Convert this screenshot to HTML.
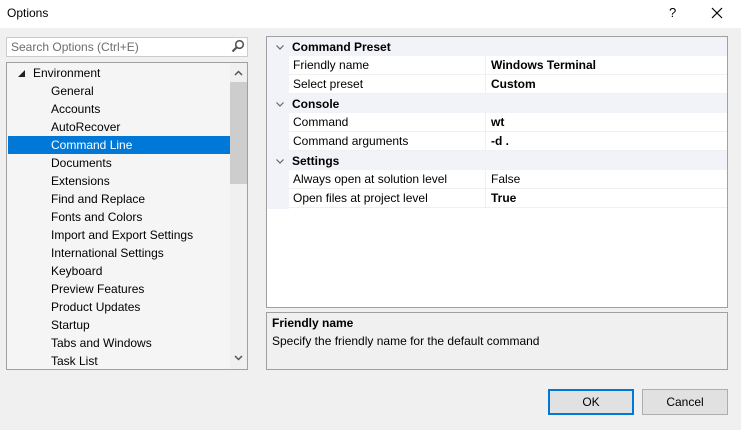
<!DOCTYPE html><html><head><style>
body{margin:0;width:741px;height:430px;background:#f0f0f0;font-family:"Liberation Sans",sans-serif;font-size:12px;color:#000;position:relative;overflow:hidden}
.a{position:absolute}
.tree div{height:18px;line-height:18px;padding-left:43px;white-space:nowrap}
.g .r{position:absolute;left:22px;right:0;height:18px;line-height:19px;border-bottom:1px solid #f0f0f0;background:#fff}
.g .h{position:absolute;left:0;right:0;height:19px;line-height:20px;background:#f1f3f8;font-weight:bold;padding-left:25px}
.g .r span{position:absolute;left:4px}.g .r b{position:absolute;left:202px}
.sep{position:absolute;left:196px;top:0;width:1px;height:18px;background:#f0f0f0}
</style></head><body>
<div class="a" style="left:0;top:0;width:741px;height:28px;background:#fff"></div>
<div class="a" style="left:7px;top:6px;font-size:12px">Options</div>
<div class="a" style="left:669px;top:5px;font-size:13px">?</div>
<svg class="a" style="left:711px;top:7px" width="12" height="12"><path d="M1 1L11 11M11 1L1 11" stroke="#000" stroke-width="1.2"/></svg>
<div class="a" style="left:6px;top:37px;width:240px;height:18px;border:1px solid #ccc;background:#fff;color:#6d6d6d;line-height:18px;text-indent:4px">Search Options (Ctrl+E)</div>
<svg class="a" style="left:231px;top:39px" width="14" height="14"><circle cx="8.5" cy="5.5" r="3.8" fill="none" stroke="#555" stroke-width="1.6"/><path d="M6 8L1.5 12.5" stroke="#555" stroke-width="2.2"/></svg>
<div class="a" style="left:6px;top:62px;width:240px;height:306px;border:1px solid #a0a0a0;background:#f5f5f5;overflow:hidden">
<div class="a tree" style="left:1px;top:1px;width:222px">
<div style="padding-left:25px"><svg style="position:absolute;left:10px;top:6px" width="7" height="7"><path d="M7 0L7 7L0 7Z" fill="#222"/></svg>Environment</div>
<div>General</div><div>Accounts</div><div>AutoRecover</div>
<div style="background:#0078d7;color:#fff">Command Line</div>
<div>Documents</div><div>Extensions</div><div>Find and Replace</div><div>Fonts and Colors</div><div>Import and Export Settings</div><div>International Settings</div><div>Keyboard</div><div>Preview Features</div><div>Product Updates</div><div>Startup</div><div>Tabs and Windows</div><div>Task List</div></div>
<div class="a" style="left:223px;top:0;width:17px;height:306px;background:#f0f0f0"></div>
<div class="a" style="left:223px;top:19px;width:17px;height:102px;background:#cdcdcd"></div>
<svg class="a" style="left:227px;top:7px" width="9" height="6"><path d="M1 5L4.5 1.5L8 5" fill="none" stroke="#555" stroke-width="1.5"/></svg>
<svg class="a" style="left:227px;top:292px" width="9" height="6"><path d="M1 1L4.5 4.5L8 1" fill="none" stroke="#555" stroke-width="1.5"/></svg>
</div>
<div class="a g" style="left:266px;top:36px;width:460px;height:270px;border:1px solid #a0a0a0;background:#fff">
<div class="a" style="left:0;top:0;width:22px;height:172px;background:#f1f3f8"></div>
<div class="h" style="top:0">Command Preset</div>
<div class="r" style="top:19px"><span>Friendly name</span><i class="sep"></i><b>Windows Terminal</b></div>
<div class="r" style="top:38px"><span>Select preset</span><i class="sep"></i><b>Custom</b></div>
<div class="h" style="top:57px">Console</div>
<div class="r" style="top:76px"><span>Command</span><i class="sep"></i><b>wt</b></div>
<div class="r" style="top:95px"><span>Command arguments</span><i class="sep"></i><b>-d .</b></div>
<div class="h" style="top:114px">Settings</div>
<div class="r" style="top:133px"><span>Always open at solution level</span><i class="sep"></i><b style="font-weight:normal">False</b></div>
<div class="r" style="top:152px"><span>Open files at project level</span><i class="sep"></i><b>True</b></div>
<svg class="a" style="left:9px;top:8px" width="8" height="5"><path d="M0.5 0.5L4 4L7.5 0.5" fill="none" stroke="#666" stroke-width="1.2"/></svg>
<svg class="a" style="left:9px;top:65px" width="8" height="5"><path d="M0.5 0.5L4 4L7.5 0.5" fill="none" stroke="#666" stroke-width="1.2"/></svg>
<svg class="a" style="left:9px;top:122px" width="8" height="5"><path d="M0.5 0.5L4 4L7.5 0.5" fill="none" stroke="#666" stroke-width="1.2"/></svg>
</div>
<div class="a" style="left:266px;top:312px;width:460px;height:56px;border:1px solid #a0a0a0;background:#f0f0f0">
<div class="a" style="left:5px;top:3px;font-weight:bold">Friendly name</div>
<div class="a" style="left:5px;top:21px">Specify the friendly name for the default command</div></div>
<div class="a" style="left:548px;top:389px;width:82px;height:22px;border:2px solid #0078d7;background:#e1e1e1;text-align:center;line-height:22px">OK</div>
<div class="a" style="left:642px;top:389px;width:84px;height:24px;border:1px solid #adadad;background:#e1e1e1;text-align:center;line-height:24px">Cancel</div>
</body></html>
